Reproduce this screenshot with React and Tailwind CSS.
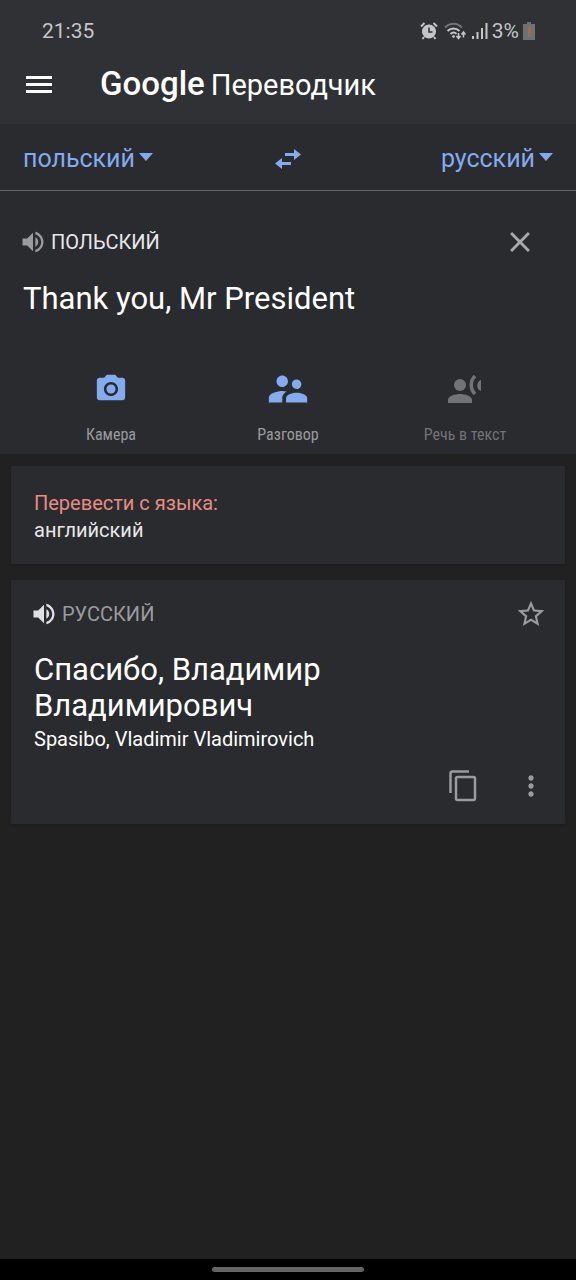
import React, { useState } from 'react';
import {
  MdCameraAlt,
  MdClose,
  MdMoreVert,
  MdStarBorder,
  MdSupervisorAccount,
  MdVolumeUp,
} from 'react-icons/md';

function StatusBar() {
  return (
    <div className="flex items-center justify-between pl-[42px] pr-[41px] h-6 text-[#c4c5c7]">
      <span className="text-[21px] leading-6">21:35</span>
      <div className="flex items-center gap-1">
        {/* alarm */}
        <svg className="w-[18px] h-[18px] mr-0.5" viewBox="0 0 18 18" fill="none">
          <circle cx="9" cy="9.5" r="7" fill="currentColor" />
          <path d="M1 4.5 4.5 1M17 4.5 13.5 1M4 15l-1.5 2M14 15l1.5 2" stroke="currentColor" strokeWidth="2" />
          <path d="M9 5.5V10h3.5" stroke="#303134" strokeWidth="1.5" />
        </svg>
        {/* wifi */}
        <svg className="w-[22px] h-[18px] mr-0.5" viewBox="0 0 22 18" fill="none" stroke="currentColor">
          <path d="M1 5.5c5-5 12-5 17 0" strokeWidth="2" opacity=".45" />
          <path d="M3.5 9c3.5-3.5 8.5-3.5 12 0" strokeWidth="2" />
          <path d="M6.5 12c2-2 4.5-2 6 0" strokeWidth="2" />
          <circle cx="9.5" cy="14.5" r="1" fill="currentColor" />
          <path d="M14.5 11v5M12.5 14l2 2.5 2-2.5M19.5 15.5v-5M17.5 12.5l2-2.5 2 2.5" strokeWidth="1.5" />
        </svg>
        {/* signal */}
        <svg className="w-4 h-4" viewBox="0 0 16 16" fill="currentColor">
          <path d="M0 13h2v3H0zM4.5 9h2v7h-2zM9 5h2v11H9zM13.5 0h2v16h-2z" />
        </svg>
        <span className="text-[21px] leading-6">3%</span>
        {/* battery */}
        <svg className="w-3 h-[18px]" viewBox="0 0 12 18">
          <path d="M4 0h4v2h4v16H0V2h4z" fill="#707173" />
          <path d="M5 5h3v7H5zM5 13h3v2H5z" fill="#a8694b" />
        </svg>
      </div>
    </div>
  );
}

function LanguageSelect({ label, value, onChange, options }) {
  return (
    <label className="flex items-center gap-1">
      <select
        aria-label={label}
        value={value}
        onChange={(e) => onChange(e.target.value)}
        className="appearance-none bg-transparent [field-sizing:content] text-[25px] leading-8 text-[#82abf0]"
      >
        {options.map((option) => (
          <option key={option}>{option}</option>
        ))}
      </select>
      <svg className="w-3.5 h-2 mb-1" viewBox="0 0 14 8" fill="#82abf0">
        <path d="M0 0h14L7 8z" />
      </svg>
    </label>
  );
}

function ModeButton({ icon, label, disabled }) {
  return (
    <button
      disabled={disabled}
      className={`flex flex-col items-center gap-3 w-[177px] ${
        disabled ? 'text-[#727377]' : 'text-[#9a9b9f]'
      }`}
    >
      <span className="flex items-center justify-center h-12">{icon}</span>
      <span className="text-base leading-5 font-['Roboto_Condensed','Roboto',sans-serif]">{label}</span>
    </button>
  );
}

function SpeechIcon() {
  return (
    <svg className="w-9 h-7" viewBox="0 0 36 28" fill="currentColor">
      <circle cx="13" cy="10" r="6" />
      <path d="M1 28v-3c0-4 7-6 12-6s12 2 12 6v3z" />
      <path d="M28 1c-5 5-5 13 0 18" fill="none" stroke="currentColor" strokeWidth="3.5" />
      <path d="M34 5c-5 1-5 10 0 11z" />
    </svg>
  );
}

function App() {
  const [from, setFrom] = useState('польский');
  const [to, setTo] = useState('русский');
  const [text, setText] = useState('Thank you, Mr President');

  const languages = ['польский', 'русский', 'английский'];

  const handleSwap = () => {
    setFrom(to);
    setTo(from);
  };

  return (
    <div className="flex flex-col min-h-screen bg-[#212121] text-white font-['Roboto',sans-serif]">
      <header className="bg-[#303134] pt-[19px] pb-[15px]">
        <StatusBar />
        <div className="flex items-center pl-[26px] mt-[17px]">
          <button aria-label="Меню" className="mr-12">
            <svg className="w-[26px] h-[18px]" viewBox="0 0 26 18" fill="currentColor">
              <path d="M0 0h26v3H0zM0 7h26v3H0zM0 14h26v3H0z" />
            </svg>
          </button>
          <h1 className="flex items-baseline gap-1.5 leading-12">
            <span className="text-[33px] font-medium">Google</span>
            <span className="text-[29px]">Переводчик</span>
          </h1>
        </div>
      </header>

      <div className="grid grid-cols-[1fr_auto_1fr] items-center h-[67px] pt-1 px-[23px] bg-[#2a2b2e] border-b border-[#646568]">
        <LanguageSelect label="Исходный язык" value={from} onChange={setFrom} options={languages} />
        <button aria-label="Поменять языки" onClick={handleSwap}>
          <svg className="w-[26px] h-5" viewBox="0 0 26 20" fill="#82abf0">
            <path d="M10 4h9V0l7 5.5-7 5.5V7h-9zM16 13H7V9L0 14.5 7 20v-4h9z" />
          </svg>
        </button>
        <div className="justify-self-end">
          <LanguageSelect label="Язык перевода" value={to} onChange={setTo} options={languages} />
        </div>
      </div>

      <main className="grow">
        <section className="bg-[#2a2b2e] pt-[34px] pb-[9px]">
          <div className="flex items-center justify-between pl-[23px] pr-[39px]">
            <button className="flex items-center gap-1 -ml-1 text-xl leading-7 text-[#e8e8ea]">
              <MdVolumeUp className="w-7 h-7 text-[#9a9b9f]" />
              ПОЛЬСКИЙ
            </button>
            <button aria-label="Очистить" onClick={() => setText('')}>
              <MdClose className="w-[34px] h-[34px] text-[#a9aaad]" />
            </button>
          </div>
          <textarea
            aria-label="Текст для перевода"
            rows={1}
            value={text}
            onChange={(e) => setText(e.target.value)}
            className="block w-full px-[23px] mt-[22px] text-[31px] leading-9 resize-none outline-none overflow-hidden"
          />
          <div className="flex justify-center mt-12">
            <ModeButton label="Камера" icon={<MdCameraAlt className="w-[34px] h-[34px] text-[#82abf0]" />} />
            <ModeButton label="Разговор" icon={<MdSupervisorAccount className="w-[46px] h-[46px] text-[#82abf0]" />} />
            <ModeButton label="Речь в текст" icon={<SpeechIcon />} disabled />
          </div>
        </section>

        <section className="mx-[11px] mt-3 px-[23px] pt-6 pb-5 bg-[#2a2b2e] shadow-sm text-xl leading-[27px]">
          <p className="text-[#e88b84]">Перевести с языка:</p>
          <a href="#english" onClick={() => setFrom('английский')} className="block text-[#e8e8ea]">
            английский
          </a>
        </section>

        <section className="mx-[11px] mt-4 pl-[23px] pr-[18px] pt-[18px] pb-[22px] bg-[#2a2b2e] shadow-sm">
          <div className="flex items-center justify-between">
            <button className="flex items-center gap-1 -ml-1 text-xl leading-7 text-[#9a9b9f]">
              <MdVolumeUp className="w-7 h-7 text-[#e0e0e2]" />
              РУССКИЙ
            </button>
            <button aria-label="В избранное">
              <MdStarBorder className="w-8 h-8 text-[#9a9b9f]" />
            </button>
          </div>
          <p className="mt-[22px] text-[31px] leading-9">
            Спасибо, Владимир
            <br />
            Владимирович
          </p>
          <p className="text-xl leading-[30px]">Spasibo, Vladimir Vladimirovich</p>
          <div className="flex items-center justify-end gap-[38px] mt-4 text-[#9a9b9f]">
            <button aria-label="Копировать">
              <svg className="w-7 h-8" viewBox="0 0 28 32" fill="none" stroke="currentColor" strokeWidth="2.5">
                <path d="M1.5 23V3.5q0-2 2-2H20" />
                <rect x="7" y="7" width="19" height="23" rx="1.5" />
              </svg>
            </button>
            <button aria-label="Ещё">
              <MdMoreVert className="w-8 h-8" />
            </button>
          </div>
        </section>
      </main>

      <footer className="flex items-center justify-center h-[21px] bg-black">
        <div className="w-[152px] h-[5px] rounded-full bg-[#656565]" />
      </footer>
    </div>
  );
}

export default App;
